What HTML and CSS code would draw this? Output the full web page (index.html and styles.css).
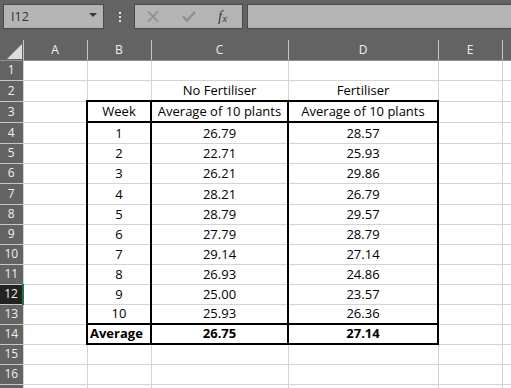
FILE: index.html
```html
<!DOCTYPE html>
<html lang="en">
<head>
    <meta charset="UTF-8">
    <title>Fertiliser trial</title>
    <link rel="stylesheet" href="styles.css">
</head>
<body>
    <div class="toolbar">
        <div class="name-box">
            <span>I12</span>
            <span class="caret"></span>
        </div>
        <svg class="grip" width="2" height="10" viewBox="0 0 2 10">
            <rect x="0" y="0" width="2" height="2" fill="#e6e6e6"></rect>
            <rect x="0" y="4" width="2" height="2" fill="#e6e6e6"></rect>
            <rect x="0" y="8" width="2" height="2" fill="#e6e6e6"></rect>
        </svg>
        <div class="fx-box">
            <svg class="icon-cancel" width="12" height="11" viewBox="0 0 12 11">
                <path d="M1 0.5l10 10M11 0.5l-10 10" stroke="#8c8c8c" stroke-width="1.6" fill="none"></path>
            </svg>
            <svg class="icon-enter" width="14" height="11" viewBox="0 0 14 11">
                <path d="M1 5.5l4 4 8-8.5" stroke="#8c8c8c" stroke-width="2.2" fill="none"></path>
            </svg>
            <span class="fx">f<sub>x</sub></span>
        </div>
        <div class="formula"></div>
    </div>

    <table class="sheet">
        <colgroup>
            <col style="width: 23px">
            <col style="width: 64px">
            <col style="width: 64px">
            <col style="width: 137px">
            <col style="width: 150px">
            <col style="width: 64px">
            <col style="width: 9px">
        </colgroup>
        <thead>
            <tr>
                <th class="corner">
                    <svg width="15" height="15" viewBox="0 0 15 15">
                        <polygon points="15,0 15,15 0,15" fill="#dcdcdc"></polygon>
                    </svg>
                </th>
                <th>A</th>
                <th>B</th>
                <th>C</th>
                <th>D</th>
                <th>E</th>
                <th></th>
            </tr>
        </thead>
        <tbody>
            <tr>
                <th>1</th><td></td><td></td><td></td><td></td><td></td><td></td>
            </tr>
            <tr class="tall">
                <th>2</th><td></td><td></td><td>No Fertiliser</td><td>Fertiliser</td><td></td><td></td>
            </tr>
            <tr class="tall">
                <th>3</th><td></td>
                <td class="bl bt bb br">Week</td>
                <td class="bt bb br">Average of 10 plants</td>
                <td class="bt bb br">Average of 10 plants</td>
                <td></td><td></td>
            </tr>
            <tr class="tall">
                <th>4</th><td></td><td class="bl br">1</td><td class="br">26.79</td><td class="br">28.57</td><td></td><td></td>
            </tr>
            <tr>
                <th>5</th><td></td><td class="bl br">2</td><td class="br">22.71</td><td class="br">25.93</td><td></td><td></td>
            </tr>
            <tr>
                <th>6</th><td></td><td class="bl br">3</td><td class="br">26.21</td><td class="br">29.86</td><td></td><td></td>
            </tr>
            <tr class="tall">
                <th>7</th><td></td><td class="bl br">4</td><td class="br">28.21</td><td class="br">26.79</td><td></td><td></td>
            </tr>
            <tr>
                <th>8</th><td></td><td class="bl br">5</td><td class="br">28.79</td><td class="br">29.57</td><td></td><td></td>
            </tr>
            <tr>
                <th>9</th><td></td><td class="bl br">6</td><td class="br">27.79</td><td class="br">28.79</td><td></td><td></td>
            </tr>
            <tr>
                <th>10</th><td></td><td class="bl br">7</td><td class="br">29.14</td><td class="br">27.14</td><td></td><td></td>
            </tr>
            <tr>
                <th>11</th><td></td><td class="bl br">8</td><td class="br">26.93</td><td class="br">24.86</td><td></td><td></td>
            </tr>
            <tr>
                <th class="active">12</th><td></td><td class="bl br">9</td><td class="br">25.00</td><td class="br">23.57</td><td></td><td></td>
            </tr>
            <tr>
                <th>13</th><td></td><td class="bl br bb">10</td><td class="br bb">25.93</td><td class="br bb">26.36</td><td></td><td></td>
            </tr>
            <tr class="total">
                <th>14</th><td></td><td class="bl br bb label">Average</td><td class="br bb">26.75</td><td class="br bb">27.14</td><td></td><td></td>
            </tr>
            <tr>
                <th>15</th><td></td><td></td><td></td><td></td><td></td><td></td>
            </tr>
            <tr>
                <th>16</th><td></td><td></td><td></td><td></td><td></td><td></td>
            </tr>
            <tr>
                <th></th><td></td><td></td><td></td><td></td><td></td><td></td>
            </tr>
        </tbody>
    </table>
</body>
</html>
```

FILE: styles.css
```css
* {
    margin: 0;
    padding: 0;
    box-sizing: border-box;
}

body {
    width: 511px;
    height: 388px;
    overflow: hidden;
    background: #ffffff;
    font-family: 'Open Sans', sans-serif;
}

/* formula bar */
.toolbar {
    height: 40px;
    background: #636363;
    display: flex;
    align-items: flex-start;
    padding-top: 4px;
}

.name-box {
    margin-left: 3px;
    width: 101px;
    height: 25px;
    background: #b4b4b4;
    border: 1px solid #4a4a4a;
    display: flex;
    align-items: center;
    justify-content: space-between;
    padding: 0 6px 0 7px;
    font-size: 12.5px;
    color: #333333;
}

.caret {
    border-left: 4px solid transparent;
    border-right: 4px solid transparent;
    border-top: 4px solid #3a3a3a;
    margin-top: -4px;
}

.grip {
    margin: 8px 13px 0 15px;
}

.fx-box {
    width: 109px;
    height: 25px;
    background: #b4b4b4;
    border: 1px solid #4a4a4a;
    display: flex;
    align-items: center;
}

.icon-cancel {
    margin-left: 12px;
}

.icon-enter {
    margin-left: 23px;
}

.fx {
    margin-left: 22px;
    font-family: 'Liberation Serif', serif;
    font-style: italic;
    font-size: 15px;
    color: #3c3c3c;
    line-height: 1;
}

.fx sub {
    font-size: 11px;
    vertical-align: -1px;
}

.formula {
    margin-left: 4px;
    flex: 1;
    height: 25px;
    background: #b4b4b4;
    border: 1px solid #4a4a4a;
    border-right: none;
}

/* grid */
.sheet {
    border-collapse: collapse;
    table-layout: fixed;
    width: 511px;
}

.sheet th {
    background: #636363;
    color: #f0f0f0;
    font-weight: normal;
    font-size: 12px;
    text-align: center;
    padding: 0;
}

.sheet thead th {
    height: 20px;
    border-right: 1px solid #c6c6c6;
    border-bottom: 1px solid #8f8f8f;
    vertical-align: middle;
}

.sheet thead th.corner {
    vertical-align: bottom;
    text-align: right;
    line-height: 0;
    padding: 0 1px 1px 0;
}

.sheet tbody th {
    border-bottom: 1px solid #c6c6c6;
    border-right: 1px solid #d4d4d4;
    line-height: 16px;
}

.sheet tbody th.active {
    background: #222222;
    border-right: 2px solid #217346;
}

.sheet td {
    height: 20px;
    border-right: 1px solid #d4d4d4;
    border-bottom: 1px solid #d4d4d4;
    vertical-align: bottom;
    text-align: center;
    font-size: 13px;
    line-height: 16px;
    color: #000000;
    padding: 0 2px 2px;
    white-space: nowrap;
    overflow: hidden;
}

.sheet tr.tall td,
.sheet tr.tall th {
    height: 21px;
}

.sheet tr.total td {
    font-weight: bold;
}

.sheet td.label {
    text-align: left;
    padding-left: 2px;
}

.bl {
    border-left: 2px solid #000000 !important;
}

.br {
    border-right: 2px solid #000000 !important;
}

.bt {
    border-top: 2px solid #000000 !important;
}

.bb {
    border-bottom: 2px solid #000000 !important;
}
```
